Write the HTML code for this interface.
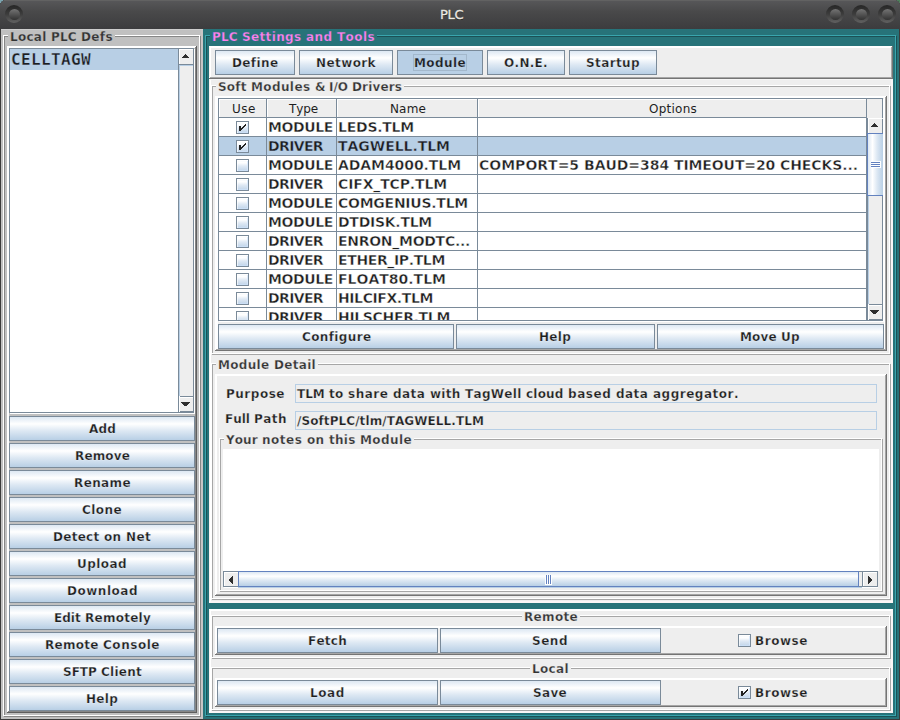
<!DOCTYPE html>
<html><head><meta charset="utf-8"><title>PLC</title>
<style>
html,body{margin:0;padding:0}
body{width:900px;height:720px;position:relative;overflow:hidden;background:#3b3b3b;font-family:"DejaVu Sans","Liberation Sans",sans-serif;color:#1e1e1e;font-kerning:none}
div{position:absolute;box-sizing:border-box}
.t{white-space:pre}
.b12{font-size:12px;font-weight:bold;line-height:14px;height:14px}
.p12{font-size:12px;font-weight:normal;line-height:14px;height:14px}
.b13{font-size:13px;font-weight:bold;line-height:15px;height:15px}
.b14{font-size:14px;font-weight:bold;line-height:16px;height:16px}
.m16{font-family:"DejaVu Sans Mono","Liberation Mono",monospace;font-size:16px;font-weight:bold;line-height:19px;height:19px}
</style></head><body>

<div style="left:0px;top:0px;width:900px;height:29px;background:linear-gradient(to bottom,#58585a 0%,#49494a 40%,#3c3c3e 100%);border-radius:5px 5px 0 0"></div>
<div style="left:4px;top:0px;width:892px;height:1px;background:#626262"></div>
<div class="t" style="left:1.6px;width:900px;top:7.3px;text-align:center;font-size:13px;line-height:16px;height:16px;color:#f0eee9;letter-spacing:-0.4px;-webkit-text-stroke:0.3px #e6e3dc;text-shadow:0 1px 0 #1c1c1c">PLC</div>
<div style="left:5px;top:5px;width:18px;height:18px;border-radius:9px;background:linear-gradient(to bottom,#262626 0%,#3c3c3c 50%,#626262 100%)"></div>
<div style="left:8.5px;top:8.5px;width:11px;height:11px;border-radius:6px;background:linear-gradient(to bottom,#747474,#323232)"></div>
<div style="left:826px;top:5px;width:18px;height:18px;border-radius:9px;background:linear-gradient(to bottom,#262626 0%,#3c3c3c 50%,#626262 100%)"></div>
<div style="left:829.5px;top:8.5px;width:11px;height:11px;border-radius:6px;background:linear-gradient(to bottom,#747474,#323232)"></div>
<div style="left:852px;top:5px;width:18px;height:18px;border-radius:9px;background:linear-gradient(to bottom,#262626 0%,#3c3c3c 50%,#626262 100%)"></div>
<div style="left:855.5px;top:8.5px;width:11px;height:11px;border-radius:6px;background:linear-gradient(to bottom,#747474,#323232)"></div>
<div style="left:878px;top:5px;width:18px;height:18px;border-radius:9px;background:linear-gradient(to bottom,#262626 0%,#3c3c3c 50%,#626262 100%)"></div>
<div style="left:881.5px;top:8.5px;width:11px;height:11px;border-radius:6px;background:linear-gradient(to bottom,#747474,#323232)"></div>
<div style="left:0px;top:0px;width:3px;height:1px;background:#7ba4af"></div><div style="left:0px;top:1px;width:1px;height:2px;background:#7ba4af"></div><div style="left:1px;top:1px;width:1px;height:1px;background:#5d7a82"></div>
<div style="left:897px;top:0px;width:3px;height:1px;background:#4f7f5c"></div><div style="left:899px;top:1px;width:1px;height:2px;background:#4f7f5c"></div><div style="left:898px;top:1px;width:1px;height:1px;background:#48604f"></div>
<div style="left:1px;top:29px;width:202px;height:690px;background:#c0c0c0"></div>
<div style="left:1px;top:29px;width:202px;height:1px;background:#cdcdcd"></div>
<div style="left:201px;top:30px;width:2px;height:689px;background:#c9c5c5"></div>
<div style="left:4px;top:36px;width:197px;height:681px;border:1px solid #868686;"></div><div style="left:3px;top:35px;width:197px;height:681px;border:1px solid #ffffff;"></div><div style="left:8px;top:35px;width:107px;height:2px;background:#c0c0c0"></div><div class="t b12" style="left:10px;top:30px;color:#333;-webkit-text-stroke:0.25px #c0c0c0;"><span style="letter-spacing:0.266px">Local </span><span style="letter-spacing:0.141px">PLC </span><span style="letter-spacing:0.383px">Defs</span></div>
<div style="left:7px;top:46px;width:1px;height:666px;background:#ffffff"></div><div style="left:8px;top:46px;width:188px;height:1px;background:#ffffff"></div><div style="left:8px;top:47px;width:1px;height:664px;background:#ffffff"></div><div style="left:9px;top:47px;width:186px;height:1px;background:#ffffff"></div><div style="left:7px;top:712px;width:190px;height:1px;background:#5e5e5e"></div><div style="left:196px;top:46px;width:1px;height:666px;background:#5e5e5e"></div><div style="left:8px;top:711px;width:188px;height:1px;background:#868686"></div><div style="left:195px;top:47px;width:1px;height:664px;background:#868686"></div>
<div style="left:9px;top:48px;width:185px;height:365px;border:1px solid #7a8a99;background:#fff"></div>
<div style="left:194px;top:49px;width:1px;height:365px;background:#fff"></div><div style="left:10px;top:413px;width:185px;height:1px;background:#fff"></div>
<div style="left:10px;top:49px;width:168px;height:21px;background:#b8cfe5"></div>
<div class="t m16" style="left:11px;top:50px;-webkit-text-stroke:0.3px #b8cfe5;"><span style="letter-spacing:0.367px">CELLTAGW</span></div>
<div style="left:178px;top:49px;width:15px;height:363px;background:#eeeeee;border-left:1px solid #7a8a99"></div>
<div style="left:179px;top:49px;width:1px;height:15px;background:#fff"></div><div style="left:179px;top:49px;width:14px;height:1px;background:#fff"></div>
<div style="left:178px;top:64px;width:15px;height:1px;background:#7a8a99"></div>
<div style="left:179px;top:65px;width:1px;height:331px;background:#b8cfe5"></div><div style="left:179px;top:65px;width:14px;height:1px;background:#b8cfe5"></div>
<div style="left:178px;top:396px;width:15px;height:1px;background:#7a8a99"></div><div style="left:179px;top:397px;width:14px;height:1px;background:#fff"></div><div style="left:179px;top:397px;width:1px;height:14px;background:#fff"></div>
<div style="left:178px;top:411px;width:15px;height:1px;background:#7a8a99"></div>
<div style="left:185px;top:54px;width:1px;height:1px;background:#2e2e2e"></div><div style="left:184px;top:55px;width:3px;height:1px;background:#2e2e2e"></div><div style="left:183px;top:56px;width:5px;height:1px;background:#2e2e2e"></div><div style="left:182px;top:57px;width:7px;height:1px;background:#2e2e2e"></div>
<div style="left:179px;top:396px;width:1px;height:1px;background:#fff"></div><div style="left:179px;top:411px;width:1px;height:1px;background:#fff"></div>
<div style="left:181px;top:402px;width:9px;height:1px;background:#2e2e2e"></div><div style="left:182px;top:403px;width:7px;height:1px;background:#2e2e2e"></div><div style="left:183px;top:404px;width:5px;height:1px;background:#2e2e2e"></div><div style="left:184px;top:405px;width:3px;height:1px;background:#2e2e2e"></div>
<div style="left:9px;top:416px;width:186px;height:25px;border:1px solid #7a8a99;background:linear-gradient(to bottom,#dde8f3 0%,#ffffff 30%,#dde8f3 60%,#b8cfe5 100%);"></div><div class="t b12" style="left:89px;top:422px;-webkit-text-stroke:0.25px #eaf1f8;"><span style="letter-spacing:0.177px">Add</span></div>
<div style="left:9px;top:443px;width:186px;height:25px;border:1px solid #7a8a99;background:linear-gradient(to bottom,#dde8f3 0%,#ffffff 30%,#dde8f3 60%,#b8cfe5 100%);"></div><div class="t b12" style="left:75px;top:449px;-webkit-text-stroke:0.25px #eaf1f8;"><span style="letter-spacing:0.151px">Remove</span></div>
<div style="left:9px;top:470px;width:186px;height:25px;border:1px solid #7a8a99;background:linear-gradient(to bottom,#dde8f3 0%,#ffffff 30%,#dde8f3 60%,#b8cfe5 100%);"></div><div class="t b12" style="left:74px;top:476px;-webkit-text-stroke:0.25px #eaf1f8;"><span style="letter-spacing:0.388px">Rename</span></div>
<div style="left:9px;top:497px;width:186px;height:25px;border:1px solid #7a8a99;background:linear-gradient(to bottom,#dde8f3 0%,#ffffff 30%,#dde8f3 60%,#b8cfe5 100%);"></div><div class="t b12" style="left:82px;top:503px;-webkit-text-stroke:0.25px #eaf1f8;"><span style="letter-spacing:0.428px">Clone</span></div>
<div style="left:9px;top:524px;width:186px;height:25px;border:1px solid #7a8a99;background:linear-gradient(to bottom,#dde8f3 0%,#ffffff 30%,#dde8f3 60%,#b8cfe5 100%);"></div><div class="t b12" style="left:53px;top:530px;-webkit-text-stroke:0.25px #eaf1f8;"><span style="letter-spacing:0.283px">Detect </span><span style="letter-spacing:0.344px">on </span><span style="letter-spacing:0.359px">Net</span></div>
<div style="left:9px;top:551px;width:186px;height:25px;border:1px solid #7a8a99;background:linear-gradient(to bottom,#dde8f3 0%,#ffffff 30%,#dde8f3 60%,#b8cfe5 100%);"></div><div class="t b12" style="left:77px;top:557px;-webkit-text-stroke:0.25px #eaf1f8;"><span style="letter-spacing:0.435px">Upload</span></div>
<div style="left:9px;top:578px;width:186px;height:25px;border:1px solid #7a8a99;background:linear-gradient(to bottom,#dde8f3 0%,#ffffff 30%,#dde8f3 60%,#b8cfe5 100%);"></div><div class="t b12" style="left:67px;top:584px;-webkit-text-stroke:0.25px #eaf1f8;"><span style="letter-spacing:0.514px">Download</span></div>
<div style="left:9px;top:605px;width:186px;height:25px;border:1px solid #7a8a99;background:linear-gradient(to bottom,#dde8f3 0%,#ffffff 30%,#dde8f3 60%,#b8cfe5 100%);"></div><div class="t b12" style="left:54px;top:611px;-webkit-text-stroke:0.25px #eaf1f8;"><span style="letter-spacing:0.034px">Edit </span><span style="letter-spacing:0.258px">Remotely</span></div>
<div style="left:9px;top:632px;width:186px;height:25px;border:1px solid #7a8a99;background:linear-gradient(to bottom,#dde8f3 0%,#ffffff 30%,#dde8f3 60%,#b8cfe5 100%);"></div><div class="t b12" style="left:45px;top:638px;-webkit-text-stroke:0.25px #eaf1f8;"><span style="letter-spacing:0.259px">Remote </span><span style="letter-spacing:0.538px">Console</span></div>
<div style="left:9px;top:659px;width:186px;height:25px;border:1px solid #7a8a99;background:linear-gradient(to bottom,#dde8f3 0%,#ffffff 30%,#dde8f3 60%,#b8cfe5 100%);"></div><div class="t b12" style="left:63px;top:665px;-webkit-text-stroke:0.25px #eaf1f8;"><span style="letter-spacing:0.000px">SFTP </span><span style="letter-spacing:0.258px">Client</span></div>
<div style="left:9px;top:686px;width:186px;height:25px;border:1px solid #7a8a99;background:linear-gradient(to bottom,#dde8f3 0%,#ffffff 30%,#dde8f3 60%,#b8cfe5 100%);"></div><div class="t b12" style="left:86px;top:692px;-webkit-text-stroke:0.25px #eaf1f8;"><span style="letter-spacing:0.277px">Help</span></div>
<div style="left:203px;top:29px;width:696px;height:690px;background:#277379"></div>
<div style="left:206px;top:36px;width:691px;height:681px;border:1px solid #1b5155;"></div><div style="left:205px;top:35px;width:691px;height:681px;border:1px solid #39a5ad;"></div><div style="left:210px;top:35px;width:167px;height:2px;background:#277379"></div><div class="t b12" style="left:212px;top:30px;color:#fc80ee;-webkit-text-stroke:0.25px #277379;"><span style="letter-spacing:0.141px">PLC </span><span style="letter-spacing:0.352px">Settings </span><span style="letter-spacing:0.395px">and </span><span style="letter-spacing:0.412px">Tools</span></div>
<div style="left:209px;top:46px;width:684px;height:33px;background:#eeeeee"></div>
<div style="left:209px;top:46px;width:1px;height:32px;background:#fff"></div><div style="left:210px;top:46px;width:682px;height:1px;background:#fff"></div><div style="left:210px;top:47px;width:1px;height:30px;background:#fff"></div><div style="left:211px;top:47px;width:680px;height:1px;background:#fff"></div><div style="left:209px;top:78px;width:684px;height:1px;background:#747474"></div><div style="left:892px;top:46px;width:1px;height:32px;background:#747474"></div><div style="left:210px;top:77px;width:682px;height:1px;background:#a6a6a6"></div><div style="left:891px;top:47px;width:1px;height:30px;background:#a6a6a6"></div>
<div style="left:215px;top:50px;width:80px;height:25px;border:1px solid #7a8a99;background:linear-gradient(to bottom,#dde8f3 0%,#ffffff 30%,#dde8f3 60%,#b8cfe5 100%);"></div><div class="t b12" style="left:232px;top:56px;-webkit-text-stroke:0.25px #eaf1f8;"><span style="letter-spacing:0.385px">Define</span></div>
<div style="left:299px;top:50px;width:94px;height:25px;border:1px solid #7a8a99;background:linear-gradient(to bottom,#dde8f3 0%,#ffffff 30%,#dde8f3 60%,#b8cfe5 100%);"></div><div class="t b12" style="left:316px;top:56px;-webkit-text-stroke:0.25px #eaf1f8;"><span style="letter-spacing:0.406px">Network</span></div>
<div style="left:397px;top:50px;width:86px;height:25px;border:1px solid #7a8a99;background:#b8cfe5;"></div><div class="t b12" style="left:414px;top:56px;-webkit-text-stroke:0.25px #b8cfe5;"><span style="letter-spacing:0.404px">Module</span></div>
<div style="left:413px;top:54px;width:54px;height:17px;border:1px solid #a3b8cc;"></div>
<div style="left:487px;top:50px;width:78px;height:25px;border:1px solid #7a8a99;background:linear-gradient(to bottom,#dde8f3 0%,#ffffff 30%,#dde8f3 60%,#b8cfe5 100%);"></div><div class="t b12" style="left:504px;top:56px;-webkit-text-stroke:0.25px #eaf1f8;"><span style="letter-spacing:0.312px">O.N.E.</span></div>
<div style="left:569px;top:50px;width:88px;height:25px;border:1px solid #7a8a99;background:linear-gradient(to bottom,#dde8f3 0%,#ffffff 30%,#dde8f3 60%,#b8cfe5 100%);"></div><div class="t b12" style="left:586px;top:56px;-webkit-text-stroke:0.25px #eaf1f8;"><span style="letter-spacing:0.391px">Startup</span></div>
<div style="left:209px;top:79px;width:684px;height:524px;background:#eeeeee;border:2px solid #f9f6f6;border-top:none;border-left-color:#fff"></div>
<div style="left:209px;top:79px;width:684px;height:1px;background:#f5f5f5"></div>
<div style="left:209px;top:47px;width:1px;height:30px;background:#f8f3f1"></div><div style="left:209px;top:80px;width:1px;height:521px;background:#f8f3f1"></div>
<div style="left:212px;top:86px;width:679px;height:269px;border:1px solid #a6a6a6;"></div><div style="left:211px;top:85px;width:679px;height:269px;border:1px solid #ffffff;"></div><div style="left:216px;top:85px;width:188px;height:2px;background:#eeeeee"></div><div class="t b12" style="left:218px;top:80px;color:#333;-webkit-text-stroke:0.25px #eeeeee;"><span style="letter-spacing:0.194px">Soft </span><span style="letter-spacing:0.389px">Modules </span><span style="letter-spacing:-0.328px">&amp; </span><span style="letter-spacing:-0.059px">I/O </span><span style="letter-spacing:0.141px">Drivers</span></div>
<div style="left:215px;top:96px;width:1px;height:254px;background:#ffffff"></div><div style="left:216px;top:96px;width:670px;height:1px;background:#ffffff"></div><div style="left:216px;top:97px;width:1px;height:252px;background:#ffffff"></div><div style="left:217px;top:97px;width:668px;height:1px;background:#ffffff"></div><div style="left:215px;top:350px;width:672px;height:1px;background:#747474"></div><div style="left:886px;top:96px;width:1px;height:254px;background:#747474"></div><div style="left:216px;top:349px;width:670px;height:1px;background:#a6a6a6"></div><div style="left:885px;top:97px;width:1px;height:252px;background:#a6a6a6"></div>
<div style="left:217px;top:97px;width:1px;height:252px;background:#ffffff"></div><div style="left:884px;top:97px;width:1px;height:252px;background:#ffffff"></div>
<div style="left:218px;top:98px;width:665px;height:223px;border:1px solid #7a8a99;background:#fff"></div>
<div style="left:883px;top:99px;width:1px;height:223px;background:#ffffff"></div><div style="left:219px;top:321px;width:665px;height:1px;background:#ffffff"></div>
<div style="left:219px;top:99px;width:663px;height:19px;background:#eeeeee"></div>
<div style="left:219px;top:117px;width:648px;height:1px;background:#7a8a99"></div>
<div style="left:219px;top:99px;width:648px;height:1px;background:#ffffff"></div>
<div style="left:219px;top:99px;width:1px;height:18px;background:#ffffff"></div>
<div style="left:266px;top:99px;width:1px;height:19px;background:#7a8a99"></div>
<div style="left:267px;top:99px;width:1px;height:18px;background:#ffffff"></div>
<div style="left:336px;top:99px;width:1px;height:19px;background:#7a8a99"></div>
<div style="left:337px;top:99px;width:1px;height:18px;background:#ffffff"></div>
<div style="left:477px;top:99px;width:1px;height:19px;background:#7a8a99"></div>
<div style="left:478px;top:99px;width:1px;height:18px;background:#ffffff"></div>
<div style="left:866px;top:99px;width:1px;height:19px;background:#7a8a99"></div>
<div style="left:882px;top:118px;width:1px;height:1px;background:#eeeeee"></div>
<div class="t p12" style="left:232px;top:102px;"><span style="letter-spacing:0.526px">Use</span></div>
<div class="t p12" style="left:289px;top:102px;"><span style="letter-spacing:-0.109px">Type</span></div>
<div class="t p12" style="left:390px;top:102px;"><span style="letter-spacing:0.148px">Name</span></div>
<div class="t p12" style="left:649px;top:102px;"><span style="letter-spacing:0.241px">Options</span></div>
<div style="left:219px;top:118px;width:647px;height:202px;overflow:hidden"><div style="left:0px;top:18px;width:647px;height:1px;background:#7a8a99"></div><div style="left:17px;top:3px;width:13px;height:13px;border:1px solid #7a8a99;background:linear-gradient(to bottom,#f4f8fc 0%,#ffffff 25%,#dfe9f4 55%,#c0d4e9 100%);box-shadow:inset 0 1px 0 #fff,inset 1px 0 0 rgba(255,255,255,.6),inset 0 -1px 0 #cbdff6,inset -1px 0 0 rgba(214,231,252,.8)"></div><svg style="position:absolute;left:17px;top:3px" width="13" height="13" viewBox="0 0 13 13" shape-rendering="crispEdges"><g fill="#222"><rect x="3" y="5" width="2" height="5"/><rect x="5" y="7" width="1" height="2"/><rect x="6" y="6" width="1" height="2"/><rect x="7" y="5" width="1" height="2"/><rect x="8" y="4" width="1" height="2"/><rect x="9" y="3" width="1" height="2"/></g></svg><div class="t b14" style="left:49px;top:1px;-webkit-text-stroke:0.4px #fff;"><span style="letter-spacing:-0.385px">MODULE</span></div><div class="t b14" style="left:119px;top:1px;-webkit-text-stroke:0.4px #fff;"><span style="letter-spacing:-0.240px">LEDS.TLM</span></div><div style="left:0px;top:19px;width:647px;height:18px;background:#b8cfe5"></div><div style="left:0px;top:37px;width:647px;height:1px;background:#7a8a99"></div><div style="left:17px;top:22px;width:13px;height:13px;border:1px solid #7a8a99;background:linear-gradient(to bottom,#f4f8fc 0%,#ffffff 25%,#dfe9f4 55%,#c0d4e9 100%);box-shadow:inset 0 1px 0 #fff,inset 1px 0 0 rgba(255,255,255,.6),inset 0 -1px 0 #cbdff6,inset -1px 0 0 rgba(214,231,252,.8)"></div><svg style="position:absolute;left:17px;top:22px" width="13" height="13" viewBox="0 0 13 13" shape-rendering="crispEdges"><g fill="#222"><rect x="3" y="5" width="2" height="5"/><rect x="5" y="7" width="1" height="2"/><rect x="6" y="6" width="1" height="2"/><rect x="7" y="5" width="1" height="2"/><rect x="8" y="4" width="1" height="2"/><rect x="9" y="3" width="1" height="2"/></g></svg><div class="t b14" style="left:49px;top:20px;-webkit-text-stroke:0.4px #b8cfe5;"><span style="letter-spacing:-0.633px">DRIVER</span></div><div class="t b14" style="left:119px;top:20px;-webkit-text-stroke:0.4px #b8cfe5;"><span style="letter-spacing:-0.041px">TAGWELL.TLM</span></div><div style="left:0px;top:56px;width:647px;height:1px;background:#7a8a99"></div><div style="left:17px;top:41px;width:13px;height:13px;border:1px solid #7a8a99;background:linear-gradient(to bottom,#f4f8fc 0%,#ffffff 25%,#dfe9f4 55%,#c0d4e9 100%);box-shadow:inset 0 1px 0 #fff,inset 1px 0 0 rgba(255,255,255,.6),inset 0 -1px 0 #cbdff6,inset -1px 0 0 rgba(214,231,252,.8)"></div><div class="t b14" style="left:49px;top:39px;-webkit-text-stroke:0.4px #fff;"><span style="letter-spacing:-0.385px">MODULE</span></div><div class="t b14" style="left:119px;top:39px;-webkit-text-stroke:0.4px #fff;"><span style="letter-spacing:-0.077px">ADAM4000.TLM</span></div><div class="t b14" style="left:260px;top:39px;-webkit-text-stroke:0.4px #fff;"><span style="letter-spacing:0.005px">COMPORT=5 </span><span style="letter-spacing:-0.036px">BAUD=384 </span><span style="letter-spacing:-0.107px">TIMEOUT=20 </span><span style="letter-spacing:-0.080px">CHECKS...</span></div><div style="left:0px;top:75px;width:647px;height:1px;background:#7a8a99"></div><div style="left:17px;top:60px;width:13px;height:13px;border:1px solid #7a8a99;background:linear-gradient(to bottom,#f4f8fc 0%,#ffffff 25%,#dfe9f4 55%,#c0d4e9 100%);box-shadow:inset 0 1px 0 #fff,inset 1px 0 0 rgba(255,255,255,.6),inset 0 -1px 0 #cbdff6,inset -1px 0 0 rgba(214,231,252,.8)"></div><div class="t b14" style="left:49px;top:58px;-webkit-text-stroke:0.4px #fff;"><span style="letter-spacing:-0.633px">DRIVER</span></div><div class="t b14" style="left:119px;top:58px;-webkit-text-stroke:0.4px #fff;"><span style="letter-spacing:-0.138px">CIFX_TCP.TLM</span></div><div style="left:0px;top:94px;width:647px;height:1px;background:#7a8a99"></div><div style="left:17px;top:79px;width:13px;height:13px;border:1px solid #7a8a99;background:linear-gradient(to bottom,#f4f8fc 0%,#ffffff 25%,#dfe9f4 55%,#c0d4e9 100%);box-shadow:inset 0 1px 0 #fff,inset 1px 0 0 rgba(255,255,255,.6),inset 0 -1px 0 #cbdff6,inset -1px 0 0 rgba(214,231,252,.8)"></div><div class="t b14" style="left:49px;top:77px;-webkit-text-stroke:0.4px #fff;"><span style="letter-spacing:-0.385px">MODULE</span></div><div class="t b14" style="left:119px;top:77px;-webkit-text-stroke:0.4px #fff;"><span style="letter-spacing:-0.251px">COMGENIUS.TLM</span></div><div style="left:0px;top:113px;width:647px;height:1px;background:#7a8a99"></div><div style="left:17px;top:98px;width:13px;height:13px;border:1px solid #7a8a99;background:linear-gradient(to bottom,#f4f8fc 0%,#ffffff 25%,#dfe9f4 55%,#c0d4e9 100%);box-shadow:inset 0 1px 0 #fff,inset 1px 0 0 rgba(255,255,255,.6),inset 0 -1px 0 #cbdff6,inset -1px 0 0 rgba(214,231,252,.8)"></div><div class="t b14" style="left:49px;top:96px;-webkit-text-stroke:0.4px #fff;"><span style="letter-spacing:-0.385px">MODULE</span></div><div class="t b14" style="left:119px;top:96px;-webkit-text-stroke:0.4px #fff;"><span style="letter-spacing:-0.266px">DTDISK.TLM</span></div><div style="left:0px;top:132px;width:647px;height:1px;background:#7a8a99"></div><div style="left:17px;top:117px;width:13px;height:13px;border:1px solid #7a8a99;background:linear-gradient(to bottom,#f4f8fc 0%,#ffffff 25%,#dfe9f4 55%,#c0d4e9 100%);box-shadow:inset 0 1px 0 #fff,inset 1px 0 0 rgba(255,255,255,.6),inset 0 -1px 0 #cbdff6,inset -1px 0 0 rgba(214,231,252,.8)"></div><div class="t b14" style="left:49px;top:115px;-webkit-text-stroke:0.4px #fff;"><span style="letter-spacing:-0.633px">DRIVER</span></div><div class="t b14" style="left:119px;top:115px;-webkit-text-stroke:0.4px #fff;"><span style="letter-spacing:-0.280px">ENRON_MODTC...</span></div><div style="left:0px;top:151px;width:647px;height:1px;background:#7a8a99"></div><div style="left:17px;top:136px;width:13px;height:13px;border:1px solid #7a8a99;background:linear-gradient(to bottom,#f4f8fc 0%,#ffffff 25%,#dfe9f4 55%,#c0d4e9 100%);box-shadow:inset 0 1px 0 #fff,inset 1px 0 0 rgba(255,255,255,.6),inset 0 -1px 0 #cbdff6,inset -1px 0 0 rgba(214,231,252,.8)"></div><div class="t b14" style="left:49px;top:134px;-webkit-text-stroke:0.4px #fff;"><span style="letter-spacing:-0.633px">DRIVER</span></div><div class="t b14" style="left:119px;top:134px;-webkit-text-stroke:0.4px #fff;"><span style="letter-spacing:-0.365px">ETHER_IP.TLM</span></div><div style="left:0px;top:170px;width:647px;height:1px;background:#7a8a99"></div><div style="left:17px;top:155px;width:13px;height:13px;border:1px solid #7a8a99;background:linear-gradient(to bottom,#f4f8fc 0%,#ffffff 25%,#dfe9f4 55%,#c0d4e9 100%);box-shadow:inset 0 1px 0 #fff,inset 1px 0 0 rgba(255,255,255,.6),inset 0 -1px 0 #cbdff6,inset -1px 0 0 rgba(214,231,252,.8)"></div><div class="t b14" style="left:49px;top:153px;-webkit-text-stroke:0.4px #fff;"><span style="letter-spacing:-0.385px">MODULE</span></div><div class="t b14" style="left:119px;top:153px;-webkit-text-stroke:0.4px #fff;"><span style="letter-spacing:0.001px">FLOAT80.TLM</span></div><div style="left:0px;top:189px;width:647px;height:1px;background:#7a8a99"></div><div style="left:17px;top:174px;width:13px;height:13px;border:1px solid #7a8a99;background:linear-gradient(to bottom,#f4f8fc 0%,#ffffff 25%,#dfe9f4 55%,#c0d4e9 100%);box-shadow:inset 0 1px 0 #fff,inset 1px 0 0 rgba(255,255,255,.6),inset 0 -1px 0 #cbdff6,inset -1px 0 0 rgba(214,231,252,.8)"></div><div class="t b14" style="left:49px;top:172px;-webkit-text-stroke:0.4px #fff;"><span style="letter-spacing:-0.633px">DRIVER</span></div><div class="t b14" style="left:119px;top:172px;-webkit-text-stroke:0.4px #fff;"><span style="letter-spacing:-0.402px">HILCIFX.TLM</span></div><div style="left:0px;top:208px;width:647px;height:1px;background:#7a8a99"></div><div style="left:17px;top:193px;width:13px;height:13px;border:1px solid #7a8a99;background:linear-gradient(to bottom,#f4f8fc 0%,#ffffff 25%,#dfe9f4 55%,#c0d4e9 100%);box-shadow:inset 0 1px 0 #fff,inset 1px 0 0 rgba(255,255,255,.6),inset 0 -1px 0 #cbdff6,inset -1px 0 0 rgba(214,231,252,.8)"></div><div class="t b14" style="left:49px;top:191px;-webkit-text-stroke:0.4px #fff;"><span style="letter-spacing:-0.633px">DRIVER</span></div><div class="t b14" style="left:119px;top:191px;-webkit-text-stroke:0.4px #fff;"><span style="letter-spacing:-0.333px">HILSCHER.TLM</span></div><div style="left:47px;top:0px;width:1px;height:202px;background:#7a8a99"></div><div style="left:117px;top:0px;width:1px;height:202px;background:#7a8a99"></div><div style="left:258px;top:0px;width:1px;height:202px;background:#7a8a99"></div></div>
<div style="left:866px;top:118px;width:1px;height:202px;background:#7a8a99"></div>
<div style="left:867px;top:118px;width:15px;height:202px;background:#eeeeee;border-left:1px solid #7a8a99"></div>
<div style="left:868px;top:118px;width:1px;height:15px;background:#ffffff"></div><div style="left:868px;top:118px;width:14px;height:1px;background:#ffffff"></div>
<div style="left:874px;top:123px;width:1px;height:1px;background:#2e2e2e"></div><div style="left:873px;top:124px;width:3px;height:1px;background:#2e2e2e"></div><div style="left:872px;top:125px;width:5px;height:1px;background:#2e2e2e"></div><div style="left:871px;top:126px;width:7px;height:1px;background:#2e2e2e"></div>
<div style="left:867px;top:133px;width:16px;height:63px;border:1px solid #6382bf;border-right:none;background:linear-gradient(to right,#dde8f3 0%,#ffffff 30%,#dde8f3 60%,#b8cfe5 100%)"></div>
<div style="left:871px;top:161px;width:10px;height:7px;background:#fff"></div>
<div style="left:871px;top:162px;width:9px;height:1px;background:#6382bf"></div>
<div style="left:871px;top:164px;width:9px;height:1px;background:#6382bf"></div>
<div style="left:871px;top:166px;width:9px;height:1px;background:#6382bf"></div>
<div style="left:868px;top:196px;width:1px;height:108px;background:#b8cfe5"></div>
<div style="left:867px;top:304px;width:15px;height:1px;background:#7a8a99"></div><div style="left:868px;top:305px;width:14px;height:1px;background:#ffffff"></div><div style="left:868px;top:305px;width:1px;height:15px;background:#ffffff"></div>
<div style="left:868px;top:319px;width:14px;height:1px;background:#7a8a99"></div>
<div style="left:868px;top:304px;width:1px;height:1px;background:#fff"></div><div style="left:868px;top:319px;width:1px;height:1px;background:#fff"></div>
<div style="left:870px;top:310px;width:9px;height:1px;background:#2e2e2e"></div><div style="left:871px;top:311px;width:7px;height:1px;background:#2e2e2e"></div><div style="left:872px;top:312px;width:5px;height:1px;background:#2e2e2e"></div><div style="left:873px;top:313px;width:3px;height:1px;background:#2e2e2e"></div>
<div style="left:218px;top:324px;width:236px;height:25px;border:1px solid #7a8a99;background:linear-gradient(to bottom,#dde8f3 0%,#ffffff 30%,#dde8f3 60%,#b8cfe5 100%);"></div><div class="t b12" style="left:302px;top:330px;-webkit-text-stroke:0.25px #eaf1f8;"><span style="letter-spacing:0.368px">Configure</span></div>
<div style="left:456px;top:324px;width:199px;height:25px;border:1px solid #7a8a99;background:linear-gradient(to bottom,#dde8f3 0%,#ffffff 30%,#dde8f3 60%,#b8cfe5 100%);"></div><div class="t b12" style="left:539px;top:330px;-webkit-text-stroke:0.25px #eaf1f8;"><span style="letter-spacing:0.277px">Help</span></div>
<div style="left:657px;top:324px;width:227px;height:25px;border:1px solid #7a8a99;background:linear-gradient(to bottom,#dde8f3 0%,#ffffff 30%,#dde8f3 60%,#b8cfe5 100%);"></div><div class="t b12" style="left:740px;top:330px;-webkit-text-stroke:0.25px #eaf1f8;"><span style="letter-spacing:0.134px">Move </span><span style="letter-spacing:0.328px">Up</span></div>
<div style="left:212px;top:364px;width:679px;height:236px;border:1px solid #a6a6a6;"></div><div style="left:211px;top:363px;width:679px;height:236px;border:1px solid #ffffff;"></div><div style="left:216px;top:363px;width:102px;height:2px;background:#eeeeee"></div><div class="t b12" style="left:218px;top:358px;color:#333;-webkit-text-stroke:0.25px #eeeeee;"><span style="letter-spacing:0.321px">Module </span><span style="letter-spacing:0.305px">Detail</span></div>
<div style="left:215px;top:374px;width:1px;height:221px;background:#ffffff"></div><div style="left:216px;top:374px;width:670px;height:1px;background:#ffffff"></div><div style="left:216px;top:375px;width:1px;height:219px;background:#ffffff"></div><div style="left:217px;top:375px;width:668px;height:1px;background:#ffffff"></div><div style="left:215px;top:595px;width:672px;height:1px;background:#747474"></div><div style="left:886px;top:374px;width:1px;height:221px;background:#747474"></div><div style="left:216px;top:594px;width:670px;height:1px;background:#a6a6a6"></div><div style="left:885px;top:375px;width:1px;height:219px;background:#a6a6a6"></div>
<div class="t b12" style="left:226px;top:387px;-webkit-text-stroke:0.25px #eeeeee;"><span style="letter-spacing:0.518px">Purpose</span></div>
<div class="t b12" style="left:225px;top:412px;-webkit-text-stroke:0.25px #eeeeee;"><span style="letter-spacing:-0.031px">Full </span><span style="letter-spacing:0.457px">Path</span></div>
<div style="left:295px;top:384px;width:582px;height:19px;border:1px solid #b8cfe5"></div>
<div style="left:295px;top:411px;width:582px;height:19px;border:1px solid #b8cfe5"></div>
<div class="t b12" style="left:297px;top:387px;-webkit-text-stroke:0.25px #eeeeee;"><span style="letter-spacing:0.012px">TLM </span><span style="letter-spacing:0.276px">to </span><span style="letter-spacing:0.495px">share </span><span style="letter-spacing:0.459px">data </span><span style="letter-spacing:0.269px">with </span><span style="letter-spacing:0.293px">TagWell </span><span style="letter-spacing:0.203px">cloud </span><span style="letter-spacing:0.542px">based </span><span style="letter-spacing:0.459px">data </span><span style="letter-spacing:0.501px">aggregator.</span></div>
<div class="t b12" style="left:297px;top:414px;-webkit-text-stroke:0.25px #eeeeee;"><span style="letter-spacing:0.084px">/SoftPLC/tlm/TAGWELL.TLM</span></div>
<div style="left:220px;top:439px;width:663px;height:153px;border:1px solid #a6a6a6;"></div><div style="left:219px;top:438px;width:663px;height:153px;border:1px solid #ffffff;"></div><div style="left:224px;top:438px;width:190px;height:2px;background:#eeeeee"></div><div class="t b12" style="left:226px;top:433px;color:#333;-webkit-text-stroke:0.25px #eeeeee;"><span style="letter-spacing:0.084px">Your </span><span style="letter-spacing:0.503px">notes </span><span style="letter-spacing:0.344px">on </span><span style="letter-spacing:0.256px">this </span><span style="letter-spacing:0.404px">Module</span></div>
<div style="left:223px;top:449px;width:656px;height:122px;background:#fff"></div>
<div style="left:223px;top:571px;width:655px;height:16px;background:#eeeeee;border:1px solid #7a8a99"></div>
<div style="left:224px;top:587px;width:654px;height:1px;background:#ffffff"></div>
<div style="left:224px;top:572px;width:1px;height:14px;background:#ffffff"></div><div style="left:224px;top:572px;width:14px;height:1px;background:#ffffff"></div>
<div style="left:238px;top:571px;width:621px;height:16px;border:1px solid #6382bf;background:linear-gradient(to bottom,#dde8f3 0%,#ffffff 30%,#dde8f3 60%,#b8cfe5 100%)"></div>
<div style="left:238px;top:587px;width:624px;height:1px;background:#b8cfe5"></div>
<div style="left:545px;top:575px;width:7px;height:10px;background:#fff"></div>
<div style="left:546px;top:575px;width:1px;height:9px;background:#6382bf"></div>
<div style="left:548px;top:575px;width:1px;height:9px;background:#6382bf"></div>
<div style="left:550px;top:575px;width:1px;height:9px;background:#6382bf"></div>
<div style="left:862px;top:571px;width:1px;height:16px;background:#7a8a99"></div><div style="left:863px;top:572px;width:1px;height:14px;background:#ffffff"></div><div style="left:863px;top:572px;width:14px;height:1px;background:#ffffff"></div>
<div style="left:229px;top:579px;width:1px;height:2px;background:#2e2e2e"></div><div style="left:230px;top:578px;width:1px;height:4px;background:#2e2e2e"></div><div style="left:231px;top:577px;width:1px;height:6px;background:#2e2e2e"></div><div style="left:232px;top:576px;width:1px;height:8px;background:#2e2e2e"></div>
<div style="left:871px;top:579px;width:1px;height:2px;background:#2e2e2e"></div><div style="left:870px;top:578px;width:1px;height:4px;background:#2e2e2e"></div><div style="left:869px;top:577px;width:1px;height:6px;background:#2e2e2e"></div><div style="left:868px;top:576px;width:1px;height:8px;background:#2e2e2e"></div>
<div style="left:209px;top:609px;width:684px;height:104px;background:#eeeeee;border:2px solid #f9f6f6;border-top-color:#fff;border-left-color:#fff"></div>
<div style="left:209px;top:610px;width:1px;height:101px;background:#f8f3f1"></div>
<div style="left:212px;top:616px;width:679px;height:43px;border:1px solid #a6a6a6;"></div><div style="left:211px;top:615px;width:679px;height:43px;border:1px solid #ffffff;"></div><div style="left:522px;top:615px;width:58px;height:2px;background:#eeeeee"></div><div class="t b12" style="left:524px;top:610px;color:#333;-webkit-text-stroke:0.25px #eeeeee;"><span style="letter-spacing:0.331px">Remote</span></div>
<div style="left:215px;top:626px;width:1px;height:28px;background:#ffffff"></div><div style="left:216px;top:626px;width:670px;height:1px;background:#ffffff"></div><div style="left:216px;top:627px;width:1px;height:26px;background:#ffffff"></div><div style="left:217px;top:627px;width:668px;height:1px;background:#ffffff"></div><div style="left:215px;top:654px;width:672px;height:1px;background:#747474"></div><div style="left:886px;top:626px;width:1px;height:28px;background:#747474"></div><div style="left:216px;top:653px;width:670px;height:1px;background:#a6a6a6"></div><div style="left:885px;top:627px;width:1px;height:26px;background:#a6a6a6"></div>
<div style="left:217px;top:628px;width:221px;height:25px;border:1px solid #7a8a99;background:linear-gradient(to bottom,#dde8f3 0%,#ffffff 30%,#dde8f3 60%,#b8cfe5 100%);"></div><div class="t b12" style="left:308px;top:634px;-webkit-text-stroke:0.25px #eaf1f8;"><span style="letter-spacing:0.253px">Fetch</span></div>
<div style="left:440px;top:628px;width:221px;height:25px;border:1px solid #7a8a99;background:linear-gradient(to bottom,#dde8f3 0%,#ffffff 30%,#dde8f3 60%,#b8cfe5 100%);"></div><div class="t b12" style="left:532px;top:634px;-webkit-text-stroke:0.25px #eaf1f8;"><span style="letter-spacing:0.520px">Send</span></div>
<div style="left:738px;top:634px;width:13px;height:13px;border:1px solid #7a8a99;background:linear-gradient(to bottom,#f4f8fc 0%,#ffffff 25%,#dfe9f4 55%,#c0d4e9 100%);box-shadow:inset 0 1px 0 #fff,inset 1px 0 0 rgba(255,255,255,.6),inset 0 -1px 0 #cbdff6,inset -1px 0 0 rgba(214,231,252,.8)"></div>
<div class="t b12" style="left:755px;top:634px;-webkit-text-stroke:0.25px #eeeeee;"><span style="letter-spacing:0.552px">Browse</span></div>
<div style="left:212px;top:668px;width:679px;height:43px;border:1px solid #a6a6a6;"></div><div style="left:211px;top:667px;width:679px;height:43px;border:1px solid #ffffff;"></div><div style="left:530px;top:667px;width:41px;height:2px;background:#eeeeee"></div><div class="t b12" style="left:532px;top:662px;color:#333;-webkit-text-stroke:0.25px #eeeeee;"><span style="letter-spacing:0.356px">Local</span></div>
<div style="left:215px;top:678px;width:1px;height:28px;background:#ffffff"></div><div style="left:216px;top:678px;width:670px;height:1px;background:#ffffff"></div><div style="left:216px;top:679px;width:1px;height:26px;background:#ffffff"></div><div style="left:217px;top:679px;width:668px;height:1px;background:#ffffff"></div><div style="left:215px;top:706px;width:672px;height:1px;background:#747474"></div><div style="left:886px;top:678px;width:1px;height:28px;background:#747474"></div><div style="left:216px;top:705px;width:670px;height:1px;background:#a6a6a6"></div><div style="left:885px;top:679px;width:1px;height:26px;background:#a6a6a6"></div>
<div style="left:217px;top:680px;width:221px;height:25px;border:1px solid #7a8a99;background:linear-gradient(to bottom,#dde8f3 0%,#ffffff 30%,#dde8f3 60%,#b8cfe5 100%);"></div><div class="t b12" style="left:310px;top:686px;-webkit-text-stroke:0.25px #eaf1f8;"><span style="letter-spacing:0.605px">Load</span></div>
<div style="left:440px;top:680px;width:221px;height:25px;border:1px solid #7a8a99;background:linear-gradient(to bottom,#dde8f3 0%,#ffffff 30%,#dde8f3 60%,#b8cfe5 100%);"></div><div class="t b12" style="left:533px;top:686px;-webkit-text-stroke:0.25px #eaf1f8;"><span style="letter-spacing:0.324px">Save</span></div>
<div style="left:738px;top:686px;width:13px;height:13px;border:1px solid #7a8a99;background:linear-gradient(to bottom,#f4f8fc 0%,#ffffff 25%,#dfe9f4 55%,#c0d4e9 100%);box-shadow:inset 0 1px 0 #fff,inset 1px 0 0 rgba(255,255,255,.6),inset 0 -1px 0 #cbdff6,inset -1px 0 0 rgba(214,231,252,.8)"></div><svg style="position:absolute;left:738px;top:686px" width="13" height="13" viewBox="0 0 13 13" shape-rendering="crispEdges"><g fill="#222"><rect x="3" y="5" width="2" height="5"/><rect x="5" y="7" width="1" height="2"/><rect x="6" y="6" width="1" height="2"/><rect x="7" y="5" width="1" height="2"/><rect x="8" y="4" width="1" height="2"/><rect x="9" y="3" width="1" height="2"/></g></svg>
<div class="t b12" style="left:755px;top:686px;-webkit-text-stroke:0.25px #eeeeee;"><span style="letter-spacing:0.552px">Browse</span></div>
</body></html>
